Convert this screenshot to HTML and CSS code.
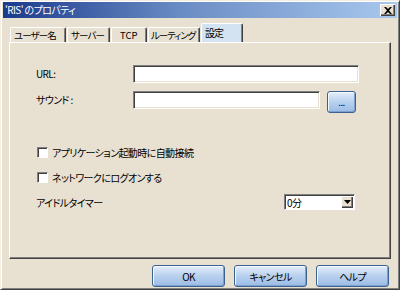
FILE: index.html
```html
<!DOCTYPE html>
<html lang="ja">

<head>
  <meta charset="UTF-8">
  <title>'RIS' のプロパティ</title>
  <link rel="stylesheet" href="styles.css">
</head>

<body>
  <div class="window">
    <div class="titlebar">
      <span class="title">'RIS' のプロパティ</span>
      <button class="close">
        <svg width="8" height="7" viewBox="0 0 8 7"><path d="M0 0h2l2 2 2-2h2L5 3.5 8 7H6L4 5 2 7H0l3-3.5z" fill="#000"/></svg>
      </button>
    </div>

    <div class="tabs">
      <div class="tab tab-user">ユーザー名</div>
      <div class="tab tab-server">サーバー</div>
      <div class="tab tab-tcp">TCP</div>
      <div class="tab tab-route">ルーティング</div>
      <div class="tab tab-active">設定</div>
    </div>

    <div class="panel">
      <div class="field-row">
        <label class="label">URL:</label>
        <div class="input input-url"></div>
      </div>
      <div class="field-row row-sound">
        <label class="label">サウンド :</label>
        <div class="input input-sound"></div>
        <button class="xp-btn browse">...</button>
      </div>

      <div class="check-row first">
        <span class="checkbox"></span>
        <span>アプリケーション起動時に自動接続</span>
      </div>
      <div class="check-row">
        <span class="checkbox"></span>
        <span>ネットワークにログオンする</span>
      </div>

      <div class="idle-row">
        <span>アイドルタイマー</span>
        <div class="select">
          <span class="select-value">0分</span>
          <span class="select-arrow">
            <svg width="7" height="4" viewBox="0 0 7 4"><path d="M0 0h7L3.5 4z" fill="#000"/></svg>
          </span>
        </div>
      </div>
    </div>

    <div class="buttons">
      <button class="xp-btn action">OK</button>
      <button class="xp-btn action">キャンセル</button>
      <button class="xp-btn action">ヘルプ</button>
    </div>
  </div>
</body>

</html>
```

FILE: styles.css
```css
body {
  margin: 0;
  padding: 0;
  font-family: "Noto Sans CJK JP", "Liberation Sans", sans-serif;
  font-size: 10px;
  font-feature-settings: "palt";
  letter-spacing: -0.6px;
  color: #000;
}

.window {
  width: 400px;
  height: 290px;
  box-sizing: border-box;
  background-color: #e8e1d2;
  border-top: 1px solid #f2eee4;
  border-left: 1px solid #f2eee4;
  border-right: 1px solid #404040;
  border-bottom: 1px solid #404040;
  box-shadow: inset 1px 1px 0 #fff, inset -1px -1px 0 #808080;
  padding: 1px 2px 0 2px;
  display: flex;
  flex-direction: column;
}

.titlebar {
  height: 16px;
  background: linear-gradient(to right, #1a3a8c, #6a8cc4 45%, #a8c8ee);
  display: flex;
  align-items: center;
  padding: 0 2px 0 2px;
}

.title {
  color: #fff;
  font-size: 10px;
  flex: 1;
  line-height: 16px;
}

.close {
  width: 15px;
  height: 12px;
  padding: 0;
  margin: 0;
  background-color: #e8e1d2;
  border: none;
  box-shadow: inset 1px 1px 0 #fff, inset -1px -1px 0 #404040, inset -2px -2px 0 #808080;
  display: flex;
  align-items: center;
  justify-content: center;
}

/* tabs */
.tabs {
  display: flex;
  align-items: flex-end;
  height: 22px;
  margin-top: 2px;
  padding-left: 7px;
}

.tab {
  height: 15px;
  line-height: 15px;
  box-sizing: border-box;
  white-space: nowrap;
  font-size: 9.5px;
  letter-spacing: -0.9px;
  border-top: 1px solid #fff;
  border-left: 1px solid #fff;
  border-right: 1px solid #404040;
  box-shadow: inset -1px 0 0 #808080;
  border-radius: 2px 2px 0 0;
  padding-left: 3px;
  margin-right: 1px;
}

.tab-user {
  width: 56px;
}

.tab-server {
  width: 43px;
}

.tab-tcp {
  width: 36px;
  padding-left: 8px;
  letter-spacing: 0;
}

.tab-route {
  width: 52px;
  padding-left: 2px;
  letter-spacing: -1.1px;
}

.tab-active {
  width: 42px;
  height: 19px;
  line-height: 18px;
  font-size: 10px;
  background-color: #d3e3f1;
  margin-left: 0;
  padding-left: 3px;
}

.panel {
  height: 217px;
  margin: 0 6px 0 6px;
  box-sizing: border-box;
  border-top: 1px solid #fff;
  border-left: 1px solid #fff;
  border-right: 1px solid #404040;
  border-bottom: 1px solid #404040;
  box-shadow: inset -1px -1px 0 #808080;
  padding: 22px 0 0 26px;
}

.field-row {
  display: flex;
  align-items: flex-start;
  height: 18px;
}

.row-sound {
  margin-top: 8px;
  height: 22px;
}

.label {
  width: 97px;
  line-height: 17px;
}

.input {
  height: 18px;
  box-sizing: border-box;
  background-color: #fff;
  border-top: 1px solid #808080;
  border-left: 1px solid #808080;
  border-right: 1px solid #fff;
  border-bottom: 1px solid #fff;
  box-shadow: inset 1px 1px 0 #404040, inset -1px -1px 0 #e8e1d2;
}

.input-url {
  width: 226px;
}

.input-sound {
  width: 187px;
  margin-right: 7px;
}

.xp-btn {
  font-family: inherit;
  font-size: 10px;
  font-feature-settings: "palt";
  letter-spacing: -0.6px;
  color: #000;
  padding: 0;
  border: 1px solid #3c6290;
  border-radius: 3px;
  background: linear-gradient(to bottom, #e4eef9, #b8d0ee 50%, #9cbce6);
  box-shadow: inset 1px 1px 0 #f4f8ff, inset -1px -1px 0 #7ca0d0;
}

.browse {
  width: 29px;
  height: 22px;
  line-height: 14px;
}

.check-row {
  display: flex;
  align-items: center;
  height: 13px;
  margin-top: 12px;
  margin-left: 1px;
}

.check-row.first {
  margin-top: 33px;
}

.checkbox {
  width: 11px;
  height: 11px;
  box-sizing: border-box;
  background-color: #fff;
  border-top: 1px solid #808080;
  border-left: 1px solid #808080;
  border-right: 1px solid #fff;
  border-bottom: 1px solid #fff;
  box-shadow: inset 1px 1px 0 #404040;
  margin-right: 4px;
}

.idle-row {
  display: flex;
  align-items: center;
  justify-content: space-between;
  height: 16px;
  margin-top: 10px;
  width: 319px;
}

.select {
  width: 71px;
  height: 16px;
  box-sizing: border-box;
  background-color: #fff;
  border-top: 1px solid #808080;
  border-left: 1px solid #808080;
  border-right: 1px solid #fff;
  border-bottom: 1px solid #fff;
  box-shadow: inset 1px 1px 0 #404040;
  display: flex;
  align-items: center;
  padding: 1px 1px 1px 2px;
}

.select-value {
  flex: 1;
  line-height: 13px;
}

.select-arrow {
  width: 12px;
  height: 12px;
  background-color: #e8e1d2;
  box-shadow: inset 1px 1px 0 #fff, inset -1px -1px 0 #404040, inset -2px -2px 0 #808080;
  display: flex;
  align-items: center;
  justify-content: center;
}

.buttons {
  display: flex;
  justify-content: flex-end;
  gap: 9px;
  padding: 6px 8px 0 0;
}

.action {
  width: 73px;
  height: 22px;
}
```
